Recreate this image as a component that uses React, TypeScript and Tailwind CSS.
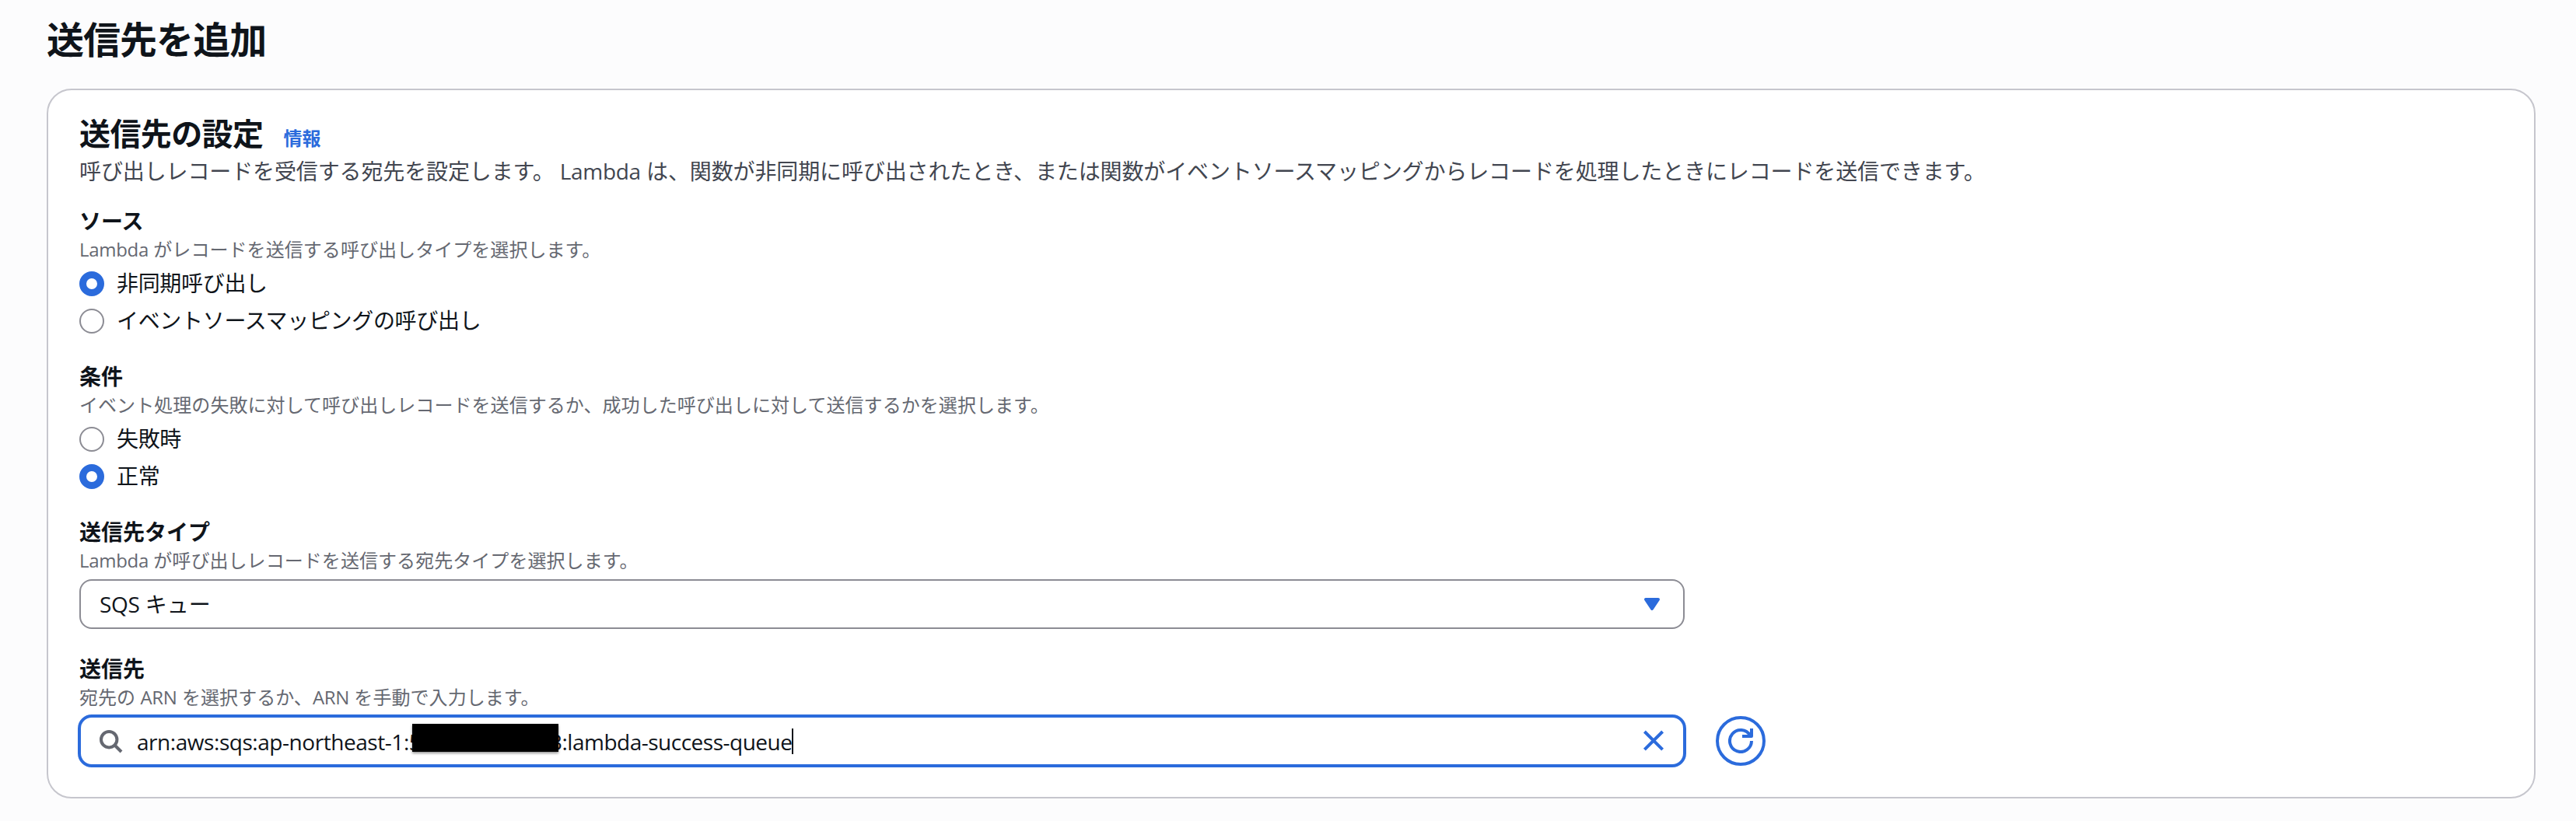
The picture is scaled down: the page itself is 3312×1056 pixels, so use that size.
import type { ReactNode } from "react";
import { clsx } from "clsx";

const sources = [
  { label: "非同期呼び出し", checked: true },
  { label: "イベントソースマッピングの呼び出し", checked: false },
];

const conditions = [
  { label: "失敗時", checked: false },
  { label: "正常", checked: true },
];

const SearchIcon = () => (
  <svg className="w-8 h-8 shrink-0" viewBox="0 0 32 32" fill="none" stroke="#656871" strokeWidth="4">
    <circle cx="14.2" cy="14.2" r="10.2" />
    <path d="M21.5 21.5L30 30" />
  </svg>
);

const CloseIcon = () => (
  <svg className="w-8 h-8 shrink-0" viewBox="0 0 32 32" fill="none" stroke="#2b6bdc" strokeWidth="4">
    <path d="M4.4 4L27.6 27.2M27.6 4L4.4 27.2" />
  </svg>
);

const CaretIcon = () => (
  <svg className="w-8 h-8 shrink-0" viewBox="0 0 32 32" fill="#2b6bdc" stroke="#2b6bdc" strokeWidth="4" strokeLinejoin="round">
    <path d="M8 10H24L16 22Z" />
  </svg>
);

const RefreshIcon = () => (
  <svg className="w-8 h-8" viewBox="0 0 32 32" fill="none" stroke="#2b6bdc" strokeWidth="4">
    <path d="M30 16A14 14 0 1 1 28.1 9" />
    <path d="M30 0V10H18" strokeLinejoin="round" />
  </svg>
);

// Latin words sit a little heavier than the Japanese text around them
const Latin = ({ children }: { children: ReactNode }) => (
  <span className="font-medium tracking-[-0.3px]">{children}</span>
);

type FieldProps = {
  label: string;
  hint: ReactNode;
  children: ReactNode;
};

const Field = ({ label, hint, children }: FieldProps) => (
  <div>
    <div className="h-10 leading-[38px] text-[28px] font-bold">{label}</div>
    <div className="h-8 leading-8 text-2xl text-[#656871] tracking-[0.06px] mb-2">{hint}</div>
    {children}
  </div>
);

const RadioGroup = ({ items }: { items: typeof sources }) => (
  <div className="flex flex-col gap-2">
    {items.map((item) => (
      <div key={item.label} className="flex items-center gap-4 h-10">
        <span
          className={clsx(
            "w-8 h-8 rounded-full bg-white",
            item.checked ? "border-[9px] border-[#2b6bdc]" : "border-2 border-[#8c8c94]"
          )}
        />
        <span className="h-10 leading-[38px] tracking-[-0.32px]">{item.label}</span>
      </div>
    ))}
  </div>
);

const App = () => {
  return (
    <div className="h-[1056px] bg-[#fcfcfd] px-[60px] pr-[52px] text-[28px] text-[#0f141a] font-['Open_Sans','Noto_Sans_CJK_JP',sans-serif]">
      <h1 className="h-[114px] pt-[21px] leading-[60px] text-5xl font-bold tracking-[-0.96px]">送信先を追加</h1>

      <div className="h-[913px] rounded-[32px] border-2 border-[#c6c6cd] bg-white pt-8 px-10">
        <div className="flex items-baseline h-[52px]">
          <h2 className="leading-[48px] text-[40px] font-bold tracking-[-0.6px]">送信先の設定</h2>
          <span className="ml-[26px] text-2xl font-bold text-[#2b6bdc]">情報</span>
        </div>
        <p className="h-10 leading-10 text-[#424650] tracking-[-0.12px] whitespace-nowrap">
          呼び出しレコードを受信する宛先を設定します。 <Latin>Lambda</Latin> は、関数が非同期に呼び出されたとき、または関数がイベントソースマッピングからレコードを処理したときにレコードを送信できます。
        </p>

        <div className="mt-[25px] flex flex-col gap-8">
          <Field label="ソース" hint={<><Latin>Lambda</Latin> がレコードを送信する呼び出しタイプを選択します。</>}>
            <RadioGroup items={sources} />
          </Field>

          <Field label="条件" hint="イベント処理の失敗に対して呼び出しレコードを送信するか、成功した呼び出しに対して送信するかを選択します。">
            <RadioGroup items={conditions} />
          </Field>

          <Field label="送信先タイプ" hint={<><Latin>Lambda</Latin> が呼び出しレコードを送信する宛先タイプを選択します。</>}>
            <div className="flex items-center justify-between w-[2064px] h-16 rounded-2xl border-2 border-[#8c8c94] pl-6 pr-6">
              <span>
                <Latin>SQS</Latin> キュー
              </span>
              <CaretIcon />
            </div>
          </Field>

          <Field label="送信先" hint={<>宛先の <Latin>ARN</Latin> を選択するか、<Latin>ARN</Latin> を手動で入力します。</>}>
            <div className="flex items-center gap-[38px] -mt-0.5 -ml-0.5">
              <div className="flex items-center w-[2068px] h-[68px] rounded-[18px] border-4 border-[#2b6bdc] pl-[22px] pr-[22px]">
                <SearchIcon />
                <div className="relative flex-1 flex items-center ml-[17px] whitespace-nowrap font-medium">
                  <span className="w-[370px] pt-0.5 pl-px tracking-[-0.45px]">arn:aws:sqs:ap-northeast-1:5</span>
                  <span className="ml-[162px] pt-0.5 tracking-[-0.5px]">3:lambda-success-queue</span>
                  <span className="w-0.5 h-[33px] bg-[#0f141a]" />
                  <span className="absolute left-[355px] top-0 w-[188px] h-9 bg-black shadow-[0_2px_3px_rgba(0,0,0,0.4)]" />
                </div>
                <CloseIcon />
              </div>
              <button className="flex items-center justify-center w-16 h-16 rounded-full border-4 border-[#2b6bdc]">
                <RefreshIcon />
              </button>
            </div>
          </Field>
        </div>
      </div>
    </div>
  );
};

export default App;
